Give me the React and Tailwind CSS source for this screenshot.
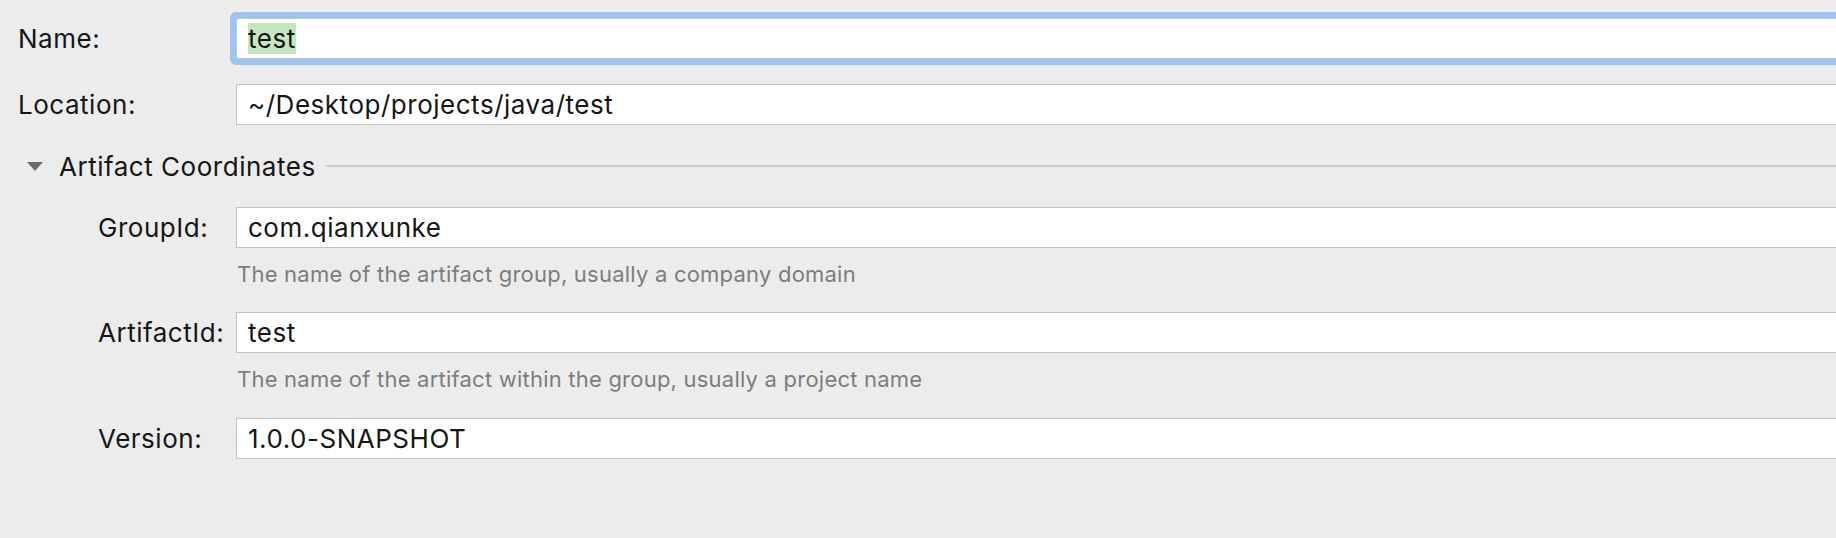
import { useState } from 'react'

const font = { fontFamily: 'Inter, "Liberation Sans", Arial, sans-serif' }

function Field({ value, focused, highlight }) {
  return (
    <div
      className={`flex-1 -mr-4 h-[41px] bg-white border border-[#c4c4c4] flex items-center pl-[11px] text-[26px] tracking-[0.02em] text-[#161616] ${
        focused ? 'ring-[6px] ring-[#9cc3f1] rounded-[2px]' : ''
      }`}
    >
      {highlight ? (
        <span className="bg-[#c6e6c1] h-[31px] flex items-center">{value}</span>
      ) : (
        <span>{value}</span>
      )}
    </div>
  )
}

function Row({ label, indent, children, className = '' }) {
  return (
    <div className={`flex items-center ${className}`}>
      <div className={`w-[236px] shrink-0 text-[26px] tracking-[0.02em] text-[#161616] ${indent ? 'pl-[98px]' : 'pl-[18px]'}`}>{label}</div>
      {children}
    </div>
  )
}

function Hint({ children, className = '' }) {
  return (
    <div className={`pl-[237px] text-[22px] tracking-[0.01em] leading-[28px] text-[#7d7d7d] ${className}`}>{children}</div>
  )
}

export default function App() {
  const [open, setOpen] = useState(true)

  return (
    <div className="w-full h-[538px] bg-[#ececec] overflow-hidden flex flex-col" style={font}>
      <Row label="Name:" className="mt-[18px]">
        <Field value="test" focused highlight />
      </Row>
      <Row label="Location:" className="mt-[25px]">
        <Field value="~/Desktop/projects/java/test" />
      </Row>

      <div className="mt-[26px] h-[30px] flex items-center cursor-pointer" onClick={() => setOpen(!open)}>
        <svg width="16" height="9" viewBox="0 0 16 9" className="ml-[27px]">
          <path d="M0 0 L16 0 L8 9 Z" fill="#6b6b6b" />
        </svg>
        <span className="ml-[16px] text-[26px] tracking-[0.02em] text-[#161616]">Artifact Coordinates</span>
        <div className="flex-1 ml-[10px] h-[2px] bg-[#cbcbcb]" />
      </div>

      {open && (
        <>
          <Row label="GroupId:" indent className="mt-[26px]">
            <Field value="com.qianxunke" />
          </Row>
          <Hint className="mt-[12px]">The name of the artifact group, usually a company domain</Hint>
          <Row label="ArtifactId:" indent className="mt-[24px]">
            <Field value="test" />
          </Row>
          <Hint className="mt-[12px]">The name of the artifact within the group, usually a project name</Hint>
          <Row label="Version:" indent className="mt-[25px]">
            <Field value="1.0.0-SNAPSHOT" />
          </Row>
        </>
      )}
    </div>
  )
}
